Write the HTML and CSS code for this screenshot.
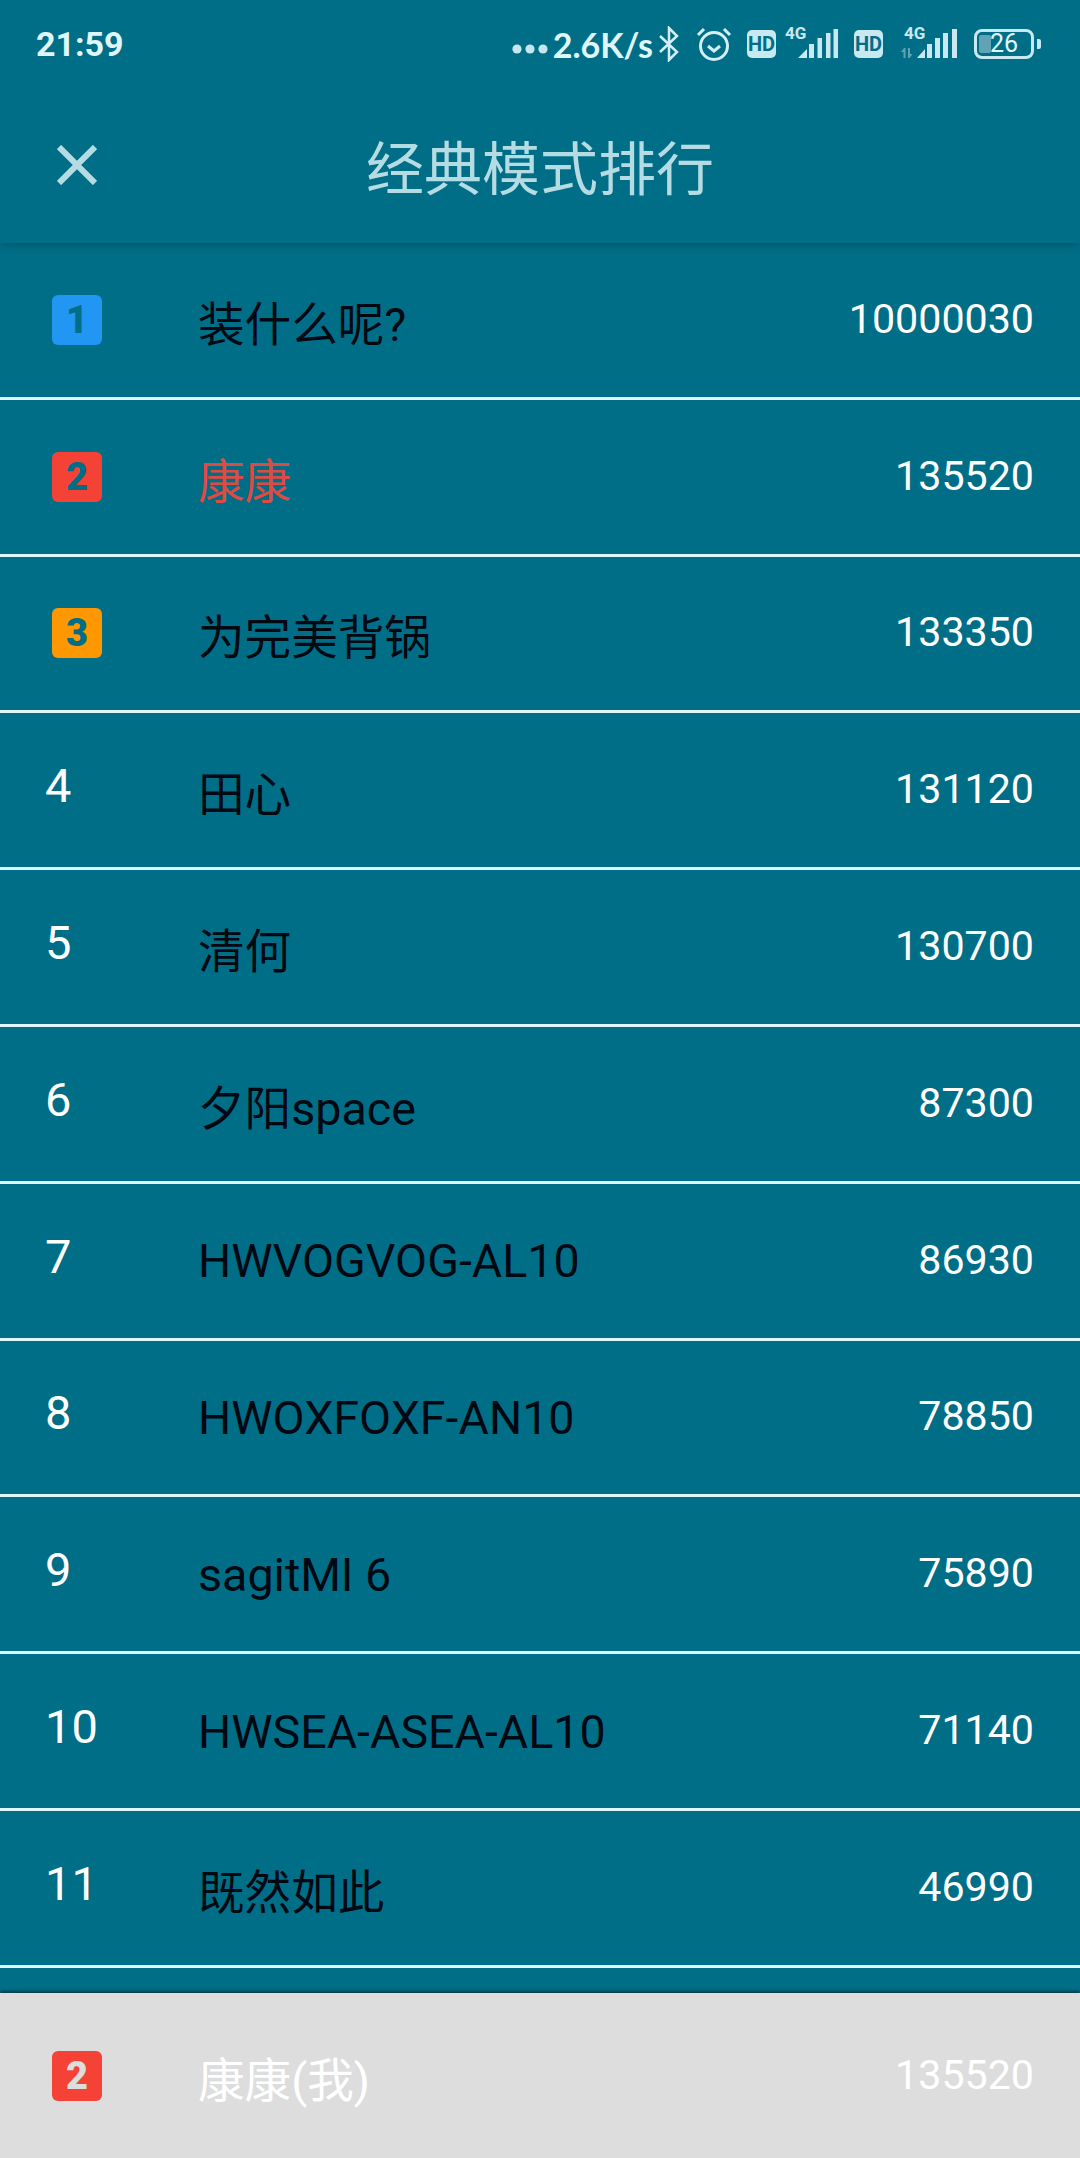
FILE: index.html

```html
<!doctype html>
<html lang="zh">
  <head>
    <meta charset="utf-8">
    <title>经典模式排行</title>
    <link rel="stylesheet" href="styles.css">
  </head>
  <body>
    <div class="page">
      <header class="top">
        <div class="status">
          <span class="time">21:59</span>
          <div class="status-right">
            <svg class="dots" width="36" height="10" viewBox="0 0 36 10"><circle cx="5" cy="5" r="4.6"/><circle cx="18" cy="5" r="4.6"/><circle cx="31" cy="5" r="4.6"/></svg>
            <span class="speed">2.6K/s</span>
            <svg class="bt" width="22" height="36" viewBox="0 0 22 36"><path d="M2 10l17 16-8 8V2l8 8L2 26"/></svg>
            <svg class="alarm" width="36" height="36" viewBox="0 0 36 36"><circle cx="18" cy="20" r="13.5"/><path d="M12 20l6 5 6-5M2 9l6-6M34 9l-6-6"/></svg>
            <span class="hd">HD</span>
            <svg class="signal" width="53" height="36" viewBox="0 0 53 36">
              <text x="0" y="17">4G</text>
              <path d="M13 36l9-9v9zM24 36V22h5v14zM32.500 36V16h4.500v20zM41 36V11h4.500v25zM48.500 36V7h4.500v29z"/>
            </svg>
            <span class="hd hd-two">HD</span>
            <svg class="signal" width="57" height="36" viewBox="0 0 57 36">
              <text x="4" y="17">4G</text>
              <path class="arrows" d="M1 30l3-4h1.500v10H3.500v-6zM8 26h2v6h2.500l-3 4H8z"/>
              <path d="M17 36l8-9v9zM27 36V22h5v14zM35 36V16h5v20zM43 36V11h5v25zM52 36V7h5v29z"/>
            </svg>
            <div class="battery">
              <span class="battery-fill"></span>
              <span class="battery-num">26</span>
            </div>
            <span class="battery-tip"></span>
          </div>
        </div>
        <div class="bar">
          <svg class="close" width="40" height="40" viewBox="0 0 40 40"><path d="M2 2l36 36M38 2L2 38"/></svg>
          <h1>经典模式排行</h1>
          <span></span>
        </div>
      </header>

      <main class="list">
        <div class="row">
          <div class="rank"><span class="medal blue">1</span></div>
          <div class="name">装什么呢?</div>
          <div class="score">10000030</div>
        </div>
        <div class="row">
          <div class="rank"><span class="medal red">2</span></div>
          <div class="name me">康康</div>
          <div class="score">135520</div>
        </div>
        <div class="row">
          <div class="rank"><span class="medal orange">3</span></div>
          <div class="name">为完美背锅</div>
          <div class="score">133350</div>
        </div>
        <div class="row">
          <div class="rank num">4</div>
          <div class="name">田心</div>
          <div class="score">131120</div>
        </div>
        <div class="row">
          <div class="rank num">5</div>
          <div class="name">清何</div>
          <div class="score">130700</div>
        </div>
        <div class="row">
          <div class="rank num">6</div>
          <div class="name">夕阳space</div>
          <div class="score">87300</div>
        </div>
        <div class="row">
          <div class="rank num">7</div>
          <div class="name">HWVOGVOG-AL10</div>
          <div class="score">86930</div>
        </div>
        <div class="row">
          <div class="rank num">8</div>
          <div class="name">HWOXFOXF-AN10</div>
          <div class="score">78850</div>
        </div>
        <div class="row">
          <div class="rank num">9</div>
          <div class="name">sagitMI 6</div>
          <div class="score">75890</div>
        </div>
        <div class="row">
          <div class="rank num">10</div>
          <div class="name">HWSEA-ASEA-AL10</div>
          <div class="score">71140</div>
        </div>
        <div class="row">
          <div class="rank num">11</div>
          <div class="name">既然如此</div>
          <div class="score">46990</div>
        </div>
      </main>

      <footer class="row mine">
        <div class="rank"><span class="medal red">2</span></div>
        <div class="name">康康(我)</div>
        <div class="score">135520</div>
      </footer>
    </div>
  </body>
</html>
```

FILE: styles.css

```css
* {
    box-sizing: border-box;
}

body {
    margin: 0;
    background: #006e87;
    font-family: Roboto, "Noto Sans CJK SC", sans-serif;
}

.page {
    display: flex;
    flex-direction: column;
    width: 1080px;
    height: 2158px;
    overflow: hidden;
}

/* status bar + title */
.top {
    position: relative;
    z-index: 1;
    height: 243px;
    flex: none;
    background: #006e87;
    box-shadow: 0 2px 8px rgba(0, 0, 0, 0.22);
}

.status {
    display: flex;
    align-items: center;
    justify-content: space-between;
    height: 88px;
    padding: 0 39px 0 36px;
    color: #e0f7fa;
}

.time {
    font-size: 34px;
    font-weight: 700;
}

.status-right {
    display: flex;
    align-items: center;
}

.dots {
    fill: #c5e6ee;
    margin-top: 10px;
}

.speed {
    margin-left: 5px;
    font-size: 34px;
    font-weight: 700;
    font-family: Lato, sans-serif;
}

.bt {
    margin-left: 5px;
    fill: none;
    stroke: #d3eef4;
    stroke-width: 2.5;
}

.alarm {
    margin-left: 16px;
    fill: none;
    stroke: #d3eef4;
    stroke-width: 3;
}

.hd {
    width: 29px;
    height: 28px;
    margin-left: 15px;
    border-radius: 5px;
    background: #c9e8ef;
    color: #006e87;
    font-size: 20px;
    font-weight: 700;
    line-height: 28px;
    text-align: center;
}

.hd-two {
    margin-left: 16px;
}

.signal {
    margin-left: 9px;
    margin-bottom: 8px;
    fill: #c9e8ef;
}

.signal text {
    font-size: 17px;
    font-weight: 700;
    font-family: Roboto, sans-serif;
}

.signal .arrows {
    fill: #5fa3b5;
}

.signal + .hd-two + .signal {
    margin-left: 17px;
}

.battery {
    position: relative;
    width: 60px;
    height: 30px;
    margin-left: 17px;
    border: 3px solid #c9e8ef;
    border-radius: 8px;
    text-align: center;
}

.battery-fill {
    position: absolute;
    left: 2px;
    top: 3px;
    width: 12px;
    height: 18px;
    border-radius: 2px;
    background: #5fa3b5;
}

.battery-num {
    position: relative;
    display: block;
    font-size: 25px;
    line-height: 24px;
}

.battery-tip {
    width: 4px;
    height: 10px;
    margin-left: 3px;
    border-radius: 0 2px 2px 0;
    background: #c9e8ef;
}

.bar {
    display: grid;
    grid-template-columns: 1fr auto 1fr;
    align-items: center;
    height: 155px;
    padding-left: 57px;
    padding-bottom: 5px;
}

.close {
    margin-top: 4px;
    fill: none;
    stroke: #b5dbe3;
    stroke-width: 6;
}

h1 {
    margin: 4px 57px 0 0;
    color: #b5dbe3;
    font-size: 58px;
    font-weight: 400;
}

/* ranking rows */
.list {
    flex: 1;
    overflow: hidden;
}

.row {
    display: flex;
    align-items: center;
    height: 156.8px;
    padding: 0 46px 0 45px;
    border-bottom: 3px solid #e0f7fa;
}

.rank {
    width: 153px;
    flex: none;
}

.num {
    margin-bottom: 9px;
    color: #fff;
    font-size: 47px;
}

.medal {
    display: flex;
    align-items: center;
    justify-content: center;
    width: 50px;
    height: 50px;
    margin-left: 7px;
    border-radius: 6px;
    color: #006e87;
    font-family: Roboto, sans-serif;
    font-size: 38px;
    font-weight: 900;
}

.blue {
    background: #2196f3;
}

.red {
    background: #f44336;
}

.orange {
    background: #ff9800;
}

.name {
    flex: 1;
    margin-top: 1px;
    color: #000812;
    font-size: 46.600px;
}

.me {
    color: #dd4b42;
}

.score {
    margin-bottom: 2px;
    color: #fff;
    font-size: 41.200px;
}

/* own row pinned at the bottom */
.mine {
    position: relative;
    flex: none;
    height: 165px;
    border-bottom: 0;
    background: #ddd;
    box-shadow: 0 -2px 3px rgba(0, 0, 0, 0.45);
}

.mine .name,
.mine .score {
    color: #fff;
}

.mine .medal {
    color: #ddd;
}
```
